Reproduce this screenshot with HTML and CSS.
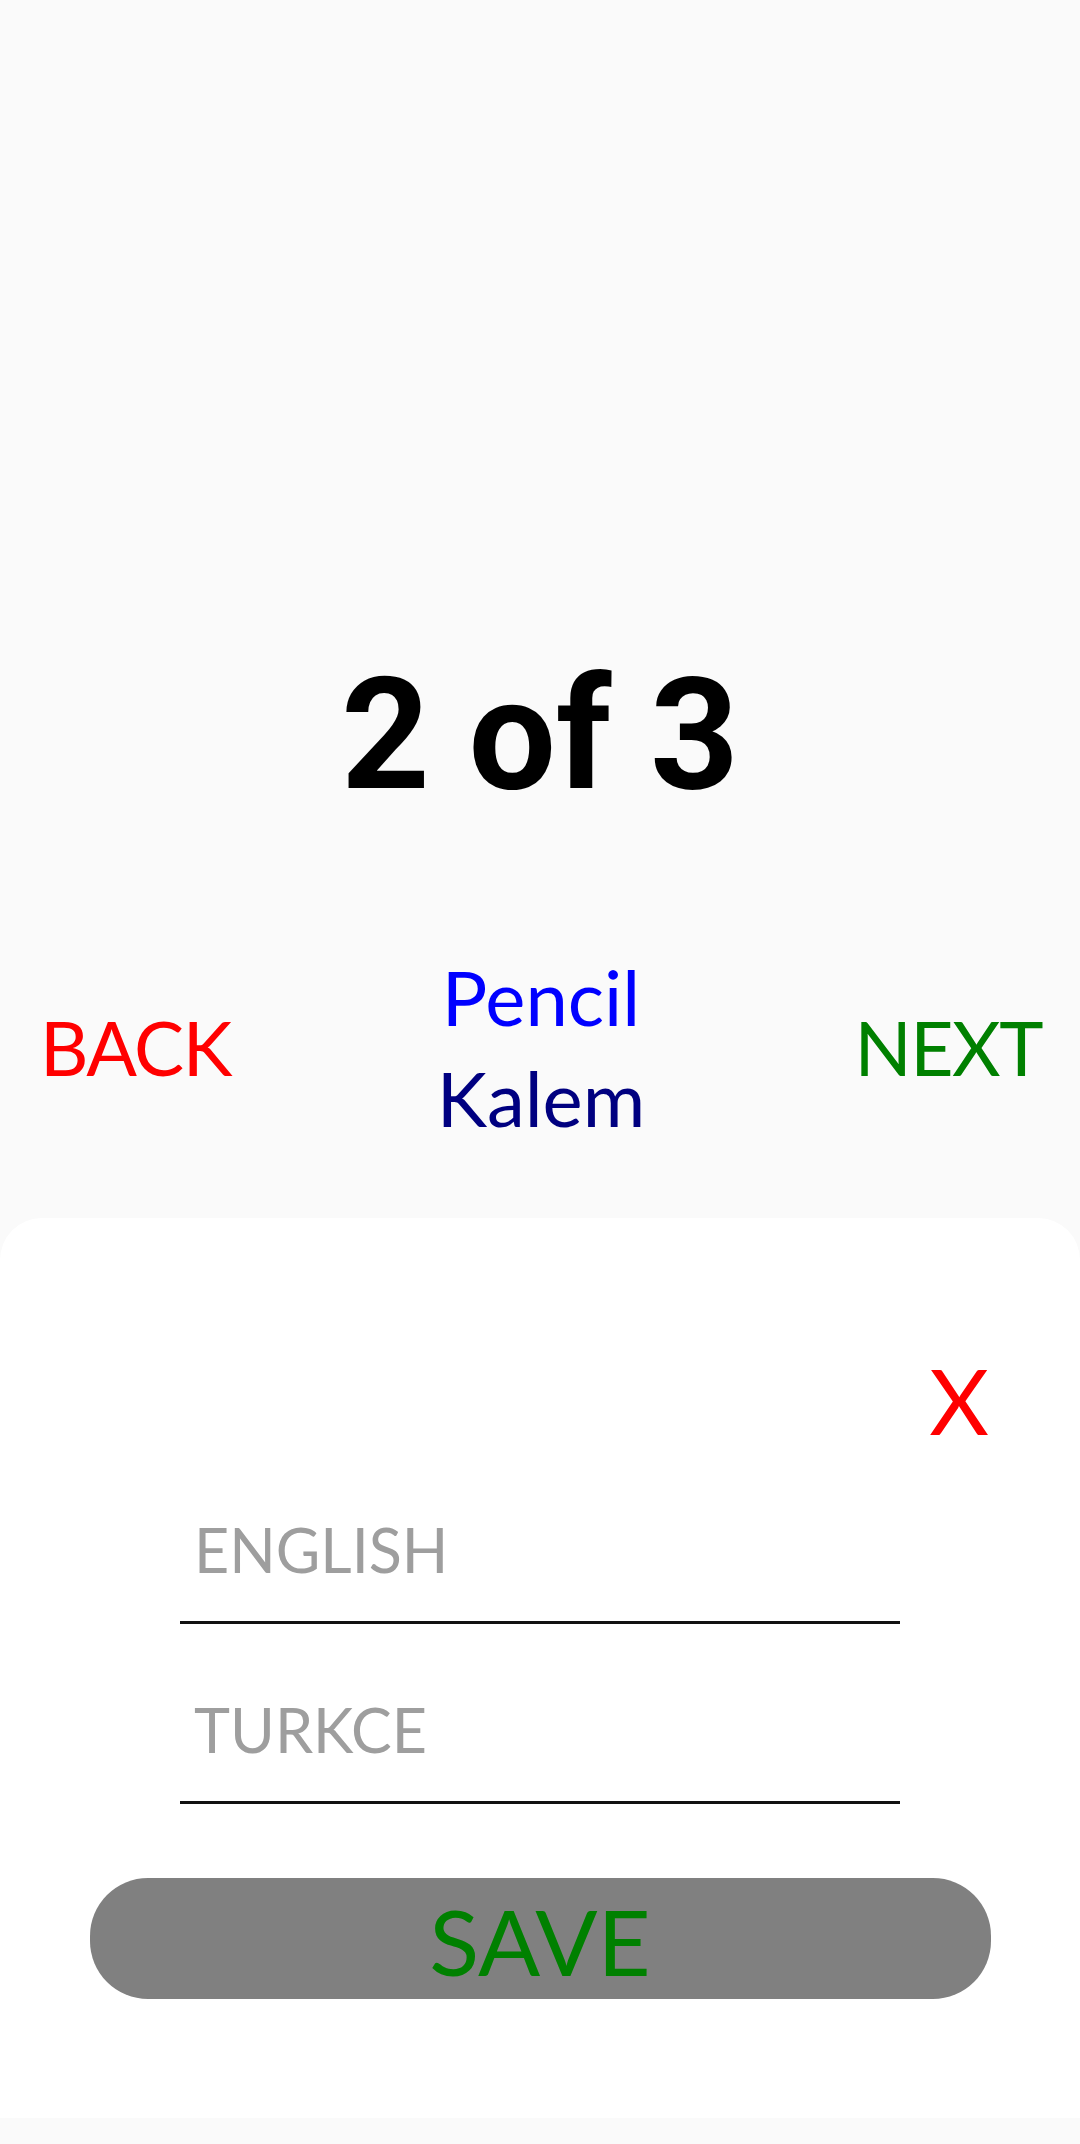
FILE: index.html
```html
<!DOCTYPE html>
<html lang="en">
<head>
<meta charset="utf-8">
<title>Flashcards</title>
<link rel="stylesheet" href="styles.css">
</head>
<body>
<div class="screen">
  <section class="card-area">
    <h1 class="counter">2 of 3</h1>
    <div class="nav-row">
      <span class="nav back">BACK</span>
      <div class="word">
        <span class="word-en">Pencil</span>
        <span class="word-tr">Kalem</span>
      </div>
      <span class="nav next">NEXT</span>
    </div>
  </section>
  <section class="sheet">
    <div class="close-row"><span class="close">X</span></div>
    <div class="field"><span class="placeholder">ENGLISH</span></div>
    <div class="field field-second"><span class="placeholder">TURKCE</span></div>
    <div class="save-btn"><span class="save-text">SAVE</span></div>
  </section>
  <div class="system-bar"></div>
</div>
</body>
</html>
```
FILE: styles.css
```css
html, body {
  margin: 0;
  padding: 0;
}
body {
  background: #fafafa;
  font-family: Lato, "Noto Sans", sans-serif;
}
.screen {
  width: 1080px;
  height: 2144px;
  display: flex;
  flex-direction: column;
  overflow: hidden;
}
.card-area {
  height: 1218px;
  flex: none;
  display: flex;
  flex-direction: column;
  background: #fafafa;
}
.counter {
  margin: 658px 0 0 0;
  font-family: Roboto, Lato, sans-serif;
  font-size: 155px;
  line-height: 155px;
  font-weight: 700;
  text-align: center;
  color: #000;
}
.nav-row {
  margin-top: 133px;
  height: 202px;
  display: grid;
  grid-template-columns: 1fr auto 1fr;
  align-items: center;
  padding: 0 38px 0 40px;
}
.nav {
  font-size: 75px;
  line-height: 77px;
  letter-spacing: -1.5px;
}
.back {
  justify-self: start;
  color: #ff0000;
}
.next {
  justify-self: end;
  color: #008000;
}
.word {
  display: flex;
  flex-direction: column;
  align-items: center;
  font-size: 76px;
  line-height: 101px;
}
.word-en { color: #0000ff; }
.word-tr { color: #000080; }
.sheet {
  flex: 1;
  background: #ffffff;
  border-radius: 42px 42px 0 0;
  display: flex;
  flex-direction: column;
  padding-top: 136px;
}
.close-row {
  display: flex;
  justify-content: flex-end;
  padding-right: 91px;
}
.close {
  color: #ff0000;
  font-size: 92px;
  line-height: 92px;
}
.field {
  margin: 73px auto 0 auto;
  width: 720px;
  box-sizing: border-box;
  padding: 0 0 41px 14px;
  border-bottom: 3px solid #111;
  font-size: 61px;
  line-height: 61px;
}
.field-second {
  margin-top: 75px;
}
.placeholder {
  color: #9e9e9e;
}
.save-btn {
  margin: 74px auto 0 auto;
  width: 901px;
  height: 121px;
  box-sizing: border-box;
  padding-top: 4px;
  border-radius: 58px;
  background: #808080;
  display: flex;
  align-items: center;
  justify-content: center;
}
.save-text {
  color: #008000;
  font-size: 92px;
  line-height: 92px;
}
.system-bar {
  height: 26px;
  flex: none;
  background: #fafafa;
}
```
